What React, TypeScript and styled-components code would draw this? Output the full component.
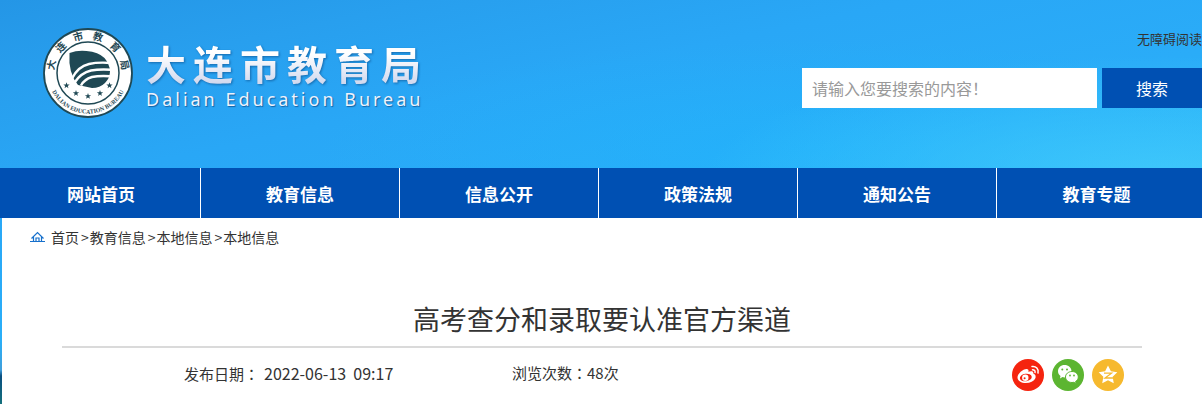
import React from "react";
import styled, { createGlobalStyle } from "styled-components";

const sans = `"Noto Sans CJK SC", sans-serif`;

const GlobalStyle = createGlobalStyle`
  *, *::before, *::after { box-sizing: border-box; }
  html { min-height: 100%; background: #fff; }
  body {
    margin: 0;
    min-height: 100vh;
    font: 14px/20px ${sans};
    color: #333;
    background:
      linear-gradient(180deg, transparent 0 340px, #3f9edb 370px, #0a4f80 376px, #14707c 404px) 0 0 / 100% 404px no-repeat,
      radial-gradient(ellipse 460px 120px at 97% 176px, rgba(70, 205, 252, 0.75), transparent),
      radial-gradient(ellipse 500px 110px at 68% 150px, rgba(30, 182, 252, 0.5), transparent),
      linear-gradient(168deg, #2496e6 0, #289fee 90px, #29a7f6 190px, #2aacf8 300px, #29b6f8 420px);
  }
  a { color: inherit; text-decoration: none; }
  h1, p { margin: 0; }
`;

const Page = styled.div`
  min-height: 100vh;
  display: flex;
  flex-direction: column;
  overflow-x: clip;
`;

const Header = styled.header`
  display: flex;
  justify-content: space-between;
  align-items: flex-start;
  padding: 28px 0 0 43px;
  min-height: 168px;
`;

const Brand = styled.a`
  display: flex;
  gap: 13px;
`;

const BrandText = styled.span`
  display: flex;
  flex-direction: column;
  padding-top: 11px;
  white-space: nowrap;
`;

const BrandName = styled.span`
  height: 50px;
  font: 700 40px/48px ${sans};
  letter-spacing: 7px;
  color: transparent;
  background: linear-gradient(180deg, #fff 30%, #d0d8ee 90%);
  background-clip: text;
  filter: drop-shadow(1px 1px 1px rgba(10, 70, 130, 0.6));
`;

const BrandLatin = styled.span`
  font: 400 18px/20px "Noto Sans", sans-serif;
  letter-spacing: 3px;
  color: #eef2fc;
  text-shadow: 1px 1px 1px rgba(10, 70, 130, 0.7);
`;

const Tools = styled.div`
  display: flex;
  flex-direction: column;
  align-items: flex-end;
  gap: 18px;
`;

const AccessLink = styled.a`
  font-size: 13px;
  line-height: 22px;
`;

const SearchForm = styled.form`
  display: flex;
  gap: 5px;
`;

const SearchInput = styled.input`
  width: 295px;
  height: 40px;
  padding: 0 10px;
  border: 0;
  background: #fff;
  font: 16px/24px ${sans};
  color: #333;
  &::placeholder { color: #999; opacity: 1; }
`;

const SearchButton = styled.button`
  width: 100px;
  height: 40px;
  padding: 0;
  border: 0;
  background: #0050b3;
  color: #fff;
  font: 16px/24px ${sans};
`;

const Nav = styled.nav`
  display: grid;
  grid-template-columns: repeat(6, minmax(0, 1fr));
  padding: 0 6px 0 2px;
  background: #0050b3;
`;

const NavItem = styled.a`
  border-right: 1px solid #fff;
  color: #fff;
  font-size: 17px;
  font-weight: 700;
  line-height: 50px;
  padding-top: 1px;
  height: 50px;
  text-align: center;
  &:last-child { border-right: 0; }
`;

const Main = styled.main`
  flex: 1;
  margin-left: 2px;
  background: #fff;
`;

const Crumbs = styled.nav`
  display: flex;
  align-items: center;
  padding: 9px 28px 11px;
`;

const HomeIcon = styled.svg`
  margin-right: 6px;
`;

const Separator = styled.span`
  padding: 0 1px 0 2px;
`;

const Article = styled.article`
  margin: 0 60px;
`;

const Title = styled.h1`
  margin-top: 29px;
  padding: 12px 0 7px;
  border-bottom: 2px solid #dadada;
  font-size: 27px;
  font-weight: 400;
  line-height: 40px;
  text-align: center;
`;

const Meta = styled.div`
  display: flex;
  align-items: center;
  padding: 11px 18px 11px 122px;
  font-size: 15px;
`;

const MetaItem = styled.p<{ $width: number }>`
  width: ${(p) => p.$width}px;
  padding-bottom: 4px;
  white-space: pre;
`;

const Colon = styled.span`
  font-family: "Noto Sans CJK TC", sans-serif;
`;

const PublishTime = styled.time`
  margin-left: 5px;
  font-size: 16px;
`;

const Share = styled.div`
  display: flex;
  gap: 8px;
  margin-left: auto;
`;

const ShareLink = styled.a<{ $color: string }>`
  display: grid;
  width: 32px;
  height: 32px;
  border-radius: 50%;
  background: ${(p) => p.$color};
`;

const NAV = ["网站首页", "教育信息", "信息公开", "政策法规", "通知公告", "教育专题"];
const CRUMBS = ["首页", "教育信息", "本地信息", "本地信息"];
const INK = "#1f4854";

const starPoints = (cx: number, cy: number, r: number, inner = 0.4) =>
  Array.from({ length: 10 }, (_, i) => {
    const a = (Math.PI / 5) * i - Math.PI / 2;
    const d = i % 2 ? r * inner : r;
    return `${(cx + d * Math.cos(a)).toFixed(2)},${(cy + d * Math.sin(a)).toFixed(2)}`;
  }).join(" ");

const STARS = [[23.5, 57.5], [33, 65.3], [45, 68.2], [57, 65.3], [66.5, 57.5]];

function Emblem() {
  return (
    <svg width="90" height="90" viewBox="0 0 90 90" role="img" aria-label="大连市教育局">
      <circle cx="45" cy="45" r="44" fill="#fff" stroke={INK} strokeWidth="1.8" />
      <circle cx="45" cy="45" r="31" fill="none" stroke={INK} strokeWidth="1.5" />
      <defs>
        <path id="upper" d="M11 45a34 34 0 0 1 68 0" />
        <path id="lower" d="M4.500 45a40.500 40.500 0 0 0 81 0" />
      </defs>
      {["大", "连", "市", "教", "育", "局"].map((ch, i) => (
        <text key={i} fill={INK} fontSize="10" fontWeight="700" fontFamily={sans} textAnchor="middle">
          <textPath href="#upper" startOffset={`${7 + i * 17.2}%`}>{ch}</textPath>
        </text>
      ))}
      <text fill={INK} fontSize="6" fontWeight="700" fontFamily={`"Liberation Serif", serif`} textAnchor="middle">
        <textPath href="#lower" startOffset="50%">DALIAN EDUCATION BUREAU</textPath>
      </text>
      <path fill={INK} d="M26.500 25q8-3 17-2 12 1 18 7 5 6 5.500 13 0 7-5 12-5 5-13 5l-14-3q-10-12-8.500-32z" />
      <g fill="none" stroke="#fff" strokeWidth="2.4">
        <path d="M29 50.500q6-12 17-14.500 9-2 22-1" />
        <path d="M32 54q6-9 16-11.500 8-1.500 20-.8" />
        <path d="M38 57.500q3-6 11-8.500 7-1.500 18-.8" />
      </g>
      {STARS.map(([x, y]) => (
        <polygon key={x} points={starPoints(x, y, 3.3)} fill={INK} />
      ))}
    </svg>
  );
}

function WeiboIcon() {
  return (
    <svg width="32" height="32" viewBox="0 0 32 32" aria-hidden="true">
      <path fill="#fff" d="M5.500 18.500c0-4 6-9 9.500-8.500 1.700.3 1.800 1.600 1.300 2.700 2.300-.8 5.500-1 5 1.800 5 2 2 9.500-7.500 9.500-4.300 0-8.300-2-8.300-5.500z" />
      <ellipse cx="13.800" cy="18.500" rx="6" ry="3.800" fill="#f5240f" transform="rotate(-8 13.800 18.500)" />
      <circle cx="13.300" cy="18.700" r="3.200" fill="#fff" />
      <circle cx="12.600" cy="19.300" r="1" fill="#f5240f" />
      <g fill="none" stroke="#fff" strokeWidth="1.500" strokeLinecap="round">
        <path d="M20 7.500c4-.6 7 2.500 6 6.500" />
        <path d="M20.500 10.700c2 0 2.900 1 2.500 2.800" />
      </g>
    </svg>
  );
}

function WechatIcon() {
  return (
    <svg width="32" height="32" viewBox="0 0 32 32" aria-hidden="true">
      <path fill="#fff" d="M12.500 6C8.800 6 6 8.700 6 12.200c0 2 1 3.700 2.500 4.800L8 19.500l2.500-1.400 2 .3c3.900 0 7-2.700 7-6.200S16.400 6 12.500 6z" />
      <path fill="#fff" stroke="#5cb531" strokeWidth="1" d="M20 12.500c-3.700 0-6.500 2.500-6.500 5.500s2.800 5.500 6.500 5.500l1.800-.2 2.400 1.300-.6-2.200c1.700-1 2.700-2.600 2.700-4.400 0-3-2.600-5.500-6.300-5.500z" />
      <g fill="#5cb531">
        <circle cx="10.300" cy="10.500" r="1" /><circle cx="15" cy="10.500" r="1" />
        <circle cx="18" cy="16.500" r=".9" /><circle cx="22" cy="16.500" r=".9" />
      </g>
    </svg>
  );
}

function QzoneIcon() {
  return (
    <svg width="32" height="32" viewBox="0 0 32 32" aria-hidden="true">
      <polygon points={starPoints(16, 16.3, 9.8, 0.5)} fill="#fff" />
      <path fill="none" stroke="#f6b92e" strokeWidth="1.300" d="M12 14.200h7.500l-6.500 4.800h8" />
    </svg>
  );
}

export default function App() {
  return (
    <Page>
      <GlobalStyle />
      <Header>
        <Brand href="#">
          <Emblem />
          <BrandText>
            <BrandName>大连市教育局</BrandName>
            <BrandLatin>Dalian Education Bureau</BrandLatin>
          </BrandText>
        </Brand>
        <Tools>
          <AccessLink href="#">无障碍阅读</AccessLink>
          <SearchForm>
            <SearchInput type="text" aria-label="搜索内容" placeholder="请输入您要搜索的内容！" />
            <SearchButton type="button">搜索</SearchButton>
          </SearchForm>
        </Tools>
      </Header>
      <Nav>
        {NAV.map((n) => <NavItem key={n} href="#">{n}</NavItem>)}
      </Nav>
      <Main>
        <Crumbs>
          <HomeIcon width="15" height="12" viewBox="0 0 15 12" fill="none" stroke="#1670cc" strokeWidth="1.2" aria-hidden="true">
            <path d="M0 10.500h15M1.500 7.500l6-6 6 6M3.500 6v4.500M11.500 6v4.500M6 10.500V7h3v3.500" />
          </HomeIcon>
          {CRUMBS.map((c, i) => (
            <React.Fragment key={i}>
              {i > 0 && <Separator>&gt;</Separator>}
              <a href="#">{c}</a>
            </React.Fragment>
          ))}
        </Crumbs>
        <Article>
          <Title>高考查分和录取要认准官方渠道</Title>
          <Meta>
            <MetaItem $width={328}>
              发布日期<Colon>：</Colon>
              <PublishTime dateTime="2022-06-13T09:17">2022-06-13{"  "}09:17</PublishTime>
            </MetaItem>
            <MetaItem $width={200}>浏览次数<Colon>：</Colon>48次</MetaItem>
            <Share>
              <ShareLink href="#" aria-label="微博" $color="#f5240f"><WeiboIcon /></ShareLink>
              <ShareLink href="#" aria-label="微信" $color="#5cb531"><WechatIcon /></ShareLink>
              <ShareLink href="#" aria-label="QQ空间" $color="#f6b92e"><QzoneIcon /></ShareLink>
            </Share>
          </Meta>
        </Article>
      </Main>
    </Page>
  );
}
